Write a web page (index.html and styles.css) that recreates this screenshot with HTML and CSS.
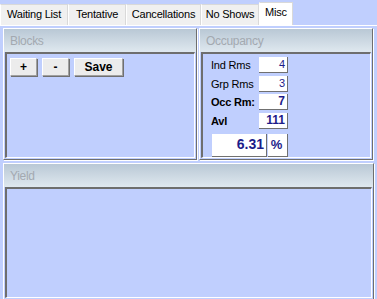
FILE: index.html
```html
<!DOCTYPE html>
<html lang="en">
<head>
  <meta charset="UTF-8" />
  <title>Misc</title>
  <link rel="stylesheet" href="styles.css">
</head>
<body>

<!-- tab strip -->
<div class="tabs">
  <div class="tab tab-wait">Waiting List</div>
  <div class="tab tab-tent">Tentative</div>
  <div class="tab tab-canc">Cancellations</div>
  <div class="tab tab-noshow">No Shows</div>
  <div class="tab tab-misc active">Misc</div>
</div>

<div class="page">
  <div class="top-row">
    <!-- Blocks -->
    <div class="panel blocks">
      <div class="panel-head">Blocks</div>
      <div class="panel-body">
        <div class="btn-row">
          <button class="btn btn-small">+</button>
          <button class="btn btn-small">-</button>
          <button class="btn btn-save">Save</button>
        </div>
      </div>
    </div>

    <!-- Occupancy -->
    <div class="panel occupancy">
      <div class="panel-head">Occupancy</div>
      <div class="panel-body">
        <div class="occ-grid">
          <span class="lbl">Ind Rms</span><span class="field">4</span>
          <span class="lbl">Grp Rms</span><span class="field">3</span>
          <span class="lbl bold">Occ Rm:</span><span class="field bold">7</span>
          <span class="lbl bold">Avl</span><span class="field bold">111</span>
        </div>
        <div class="pct-row">
          <span class="field pct-val">6.31</span><span class="field pct-sign">%</span>
        </div>
      </div>
    </div>
  </div>

  <!-- Yield -->
  <div class="panel yield">
    <div class="panel-head">Yield</div>
    <div class="panel-body"></div>
  </div>
</div>

</body>
</html>
```

FILE: styles.css
```css
* {
  box-sizing: border-box;
  margin: 0;
  padding: 0;
}

html, body {
  width: 377px;
  height: 299px;
  overflow: hidden;
  background-color: #c0cffe;
  font-family: 'Liberation Sans', Arial, sans-serif;
  font-size: 11px;
  color: #000;
}

/* TABS */
.tabs {
  display: flex;
  height: 25px;
  padding-top: 4px;
  align-items: flex-end;
}

.tab {
  height: 21px;
  padding-top: 3px;
  text-align: center;
  background-color: #f0f0f0;
  border: 1px solid #d9d9d9;
  border-bottom: none;
  border-left-color: #fff;
  white-space: nowrap;
  overflow: hidden;
  letter-spacing: -0.2px;
}

.tab-wait { width: 68px; }
.tab-tent { width: 58px; }
.tab-canc { width: 75px; }
.tab-noshow { width: 58px; }
.tab-misc { width: 34px; }

.tab.active {
  height: 23px;
  margin-top: -2px;
  padding-top: 3px;
  background-color: #fff;
}

/* PAGE */
.page {
  border-top: 1px solid #fff;
  padding: 2px 3px 0 3px;
  display: flex;
  flex-direction: column;
  gap: 3px;
}

.top-row {
  display: flex;
  gap: 2px;
  height: 132px;
}

.panel {
  display: flex;
  flex-direction: column;
  border: 1px solid #fff;
  border-right-color: #6e6e6e;
  border-bottom-color: #6e6e6e;
  box-shadow: 1px 1px 0 #fff;
}

.blocks { width: 194px; }
.occupancy { width: 174px; }
.yield { width: 371px; height: 137px; }

.panel-head {
  height: 23px;
  padding: 5px 0 0 6px;
  font-size: 12px;
  letter-spacing: -0.3px;
  color: #a3a9b0;
  background: linear-gradient(#b9c8d5, #dfe8ef);
}

.panel-body {
  flex: 1;
  margin: 0 1px 1px 1px;
  background-color: #c0cffe;
  border-top: 2px solid #6e6e6e;
  border-left: 2px solid #6e6e6e;
  border-right: 1px solid #fff;
  border-bottom: 1px solid #fff;
  overflow: hidden;
}

/* BLOCKS */
.btn-row {
  display: flex;
  gap: 5px;
  padding: 4px 0 0 3px;
}

.btn {
  height: 18px;
  font-family: inherit;
  font-size: 12px;
  font-weight: bold;
  background-color: #ececec;
  border: 1px solid #a0a0a0;
  border-top-color: #fff;
  border-left-color: #fff;
  box-shadow: 1px 1px 0 #707070;
}

.btn-small { width: 27px; }
.btn-save { width: 49px; }

/* OCCUPANCY */
.occ-grid {
  display: grid;
  grid-template-columns: 48px 29px;
  row-gap: 2.6px;
  padding: 3px 0 0 8px;
}

.lbl {
  line-height: 16px;
  white-space: nowrap;
  overflow: hidden;
  letter-spacing: -0.2px;
}

.field {
  height: 16px;
  line-height: 15px;
  padding-right: 2px;
  text-align: right;
  color: #1c1c8a;
  background-color: #fff;
  border-right: 1px solid #707070;
  border-bottom: 1px solid #707070;
}

.bold { font-weight: bold; }
.field.bold { font-size: 12px; }

.pct-row {
  display: flex;
  gap: 1px;
  padding: 5px 0 0 9px;
}

.pct-val {
  width: 55px;
  height: 23px;
  line-height: 21px;
  font-size: 14px;
  font-weight: bold;
}

.pct-sign {
  width: 20px;
  height: 23px;
  line-height: 21px;
  font-size: 13px;
  font-weight: bold;
  text-align: center;
}
```
